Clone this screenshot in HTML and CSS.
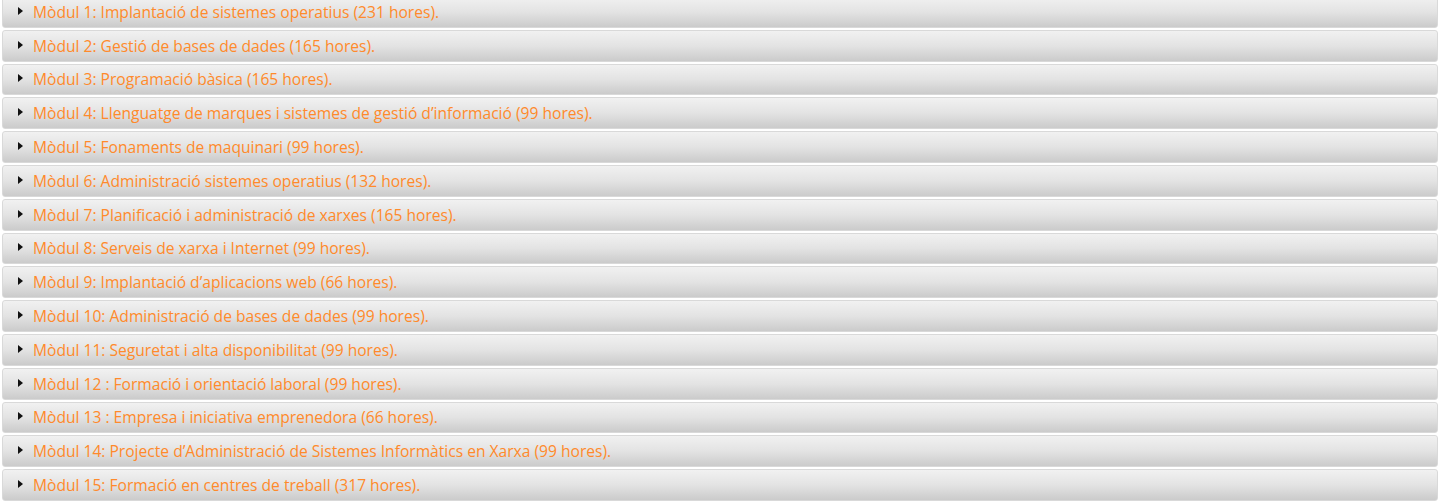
FILE: index.html
```html
<!DOCTYPE html>
<html lang="ca">
<head>
<meta charset="utf-8">
<title>Mòduls</title>
<link rel="stylesheet" href="styles.css">
</head>
<body>
<div class="list">
  <details class="item"><summary>Mòdul 1: Implantació de sistemes operatius (231 hores).</summary></details>
  <details class="item"><summary>Mòdul 2: Gestió de bases de dades (165 hores).</summary></details>
  <details class="item"><summary>Mòdul 3: Programació bàsica (165 hores).</summary></details>
  <details class="item"><summary>Mòdul 4: Llenguatge de marques i sistemes de gestió d’informació (99 hores).</summary></details>
  <details class="item"><summary>Mòdul 5: Fonaments de maquinari (99 hores).</summary></details>
  <details class="item"><summary>Mòdul 6: Administració sistemes operatius (132 hores).</summary></details>
  <details class="item"><summary>Mòdul 7: Planificació i administració de xarxes (165 hores).</summary></details>
  <details class="item"><summary>Mòdul 8: Serveis de xarxa i Internet (99 hores).</summary></details>
  <details class="item"><summary>Mòdul 9: Implantació d’aplicacions web (66 hores).</summary></details>
  <details class="item"><summary>Mòdul 10: Administració de bases de dades (99 hores).</summary></details>
  <details class="item"><summary>Mòdul 11: Seguretat i alta disponibilitat (99 hores).</summary></details>
  <details class="item"><summary>Mòdul 12 : Formació i orientació laboral (99 hores).</summary></details>
  <details class="item"><summary>Mòdul 13 : Empresa i iniciativa emprenedora (66 hores).</summary></details>
  <details class="item"><summary>Mòdul 14: Projecte d’Administració de Sistemes Informàtics en Xarxa (99 hores).</summary></details>
  <details class="item"><summary>Mòdul 15: Formació en centres de treball (317 hores).</summary></details>
</div>
</body>
</html>
```
FILE: styles.css
```css
html, body {
  margin: 0;
  padding: 0;
  background: #ffffff;
}
body {
  font-family: "Open Sans", "Liberation Sans", sans-serif;
  overflow: hidden;
}
.list {
  display: flex;
  flex-direction: column;
  gap: 2px;
  padding: 0 3px 0 2px;
  margin-top: -4px;
}
.item {
  box-sizing: border-box;
  height: 31.8px;
  border: 1px solid #d9d9d9;
  border-radius: 3px;
  background: linear-gradient(to bottom, #f1f1f1 0%, #e3e3e3 50%, #cbcbcb 100%);
}
.item summary {
  list-style: none;
  display: flex;
  align-items: center;
  height: 100%;
  padding-left: 30px;
  font-size: 15.6px;
  color: #ff8a2b;
  position: relative;
  cursor: pointer;
}
.item summary::-webkit-details-marker { display: none; }
.item summary::before {
  content: "";
  position: absolute;
  left: 15px;
  top: 50%;
  margin-top: -5px;
  border-left: 5px solid #111;
  border-top: 4.5px solid transparent;
  border-bottom: 4.5px solid transparent;
}
```
